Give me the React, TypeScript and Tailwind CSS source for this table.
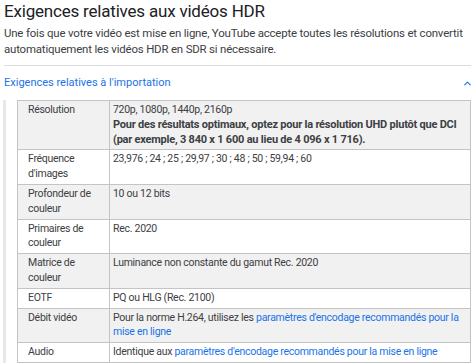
import { ChevronUp } from "lucide-react";

type Row = { label: string; value: React.ReactNode };

const Link = ({ children }: { children: React.ReactNode }) => (
  <a className="text-[#1a73e8]">{children}</a>
);

const rows: Row[] = [
  {
    label: "Résolution",
    value: (
      <>
        720p, 1080p, 1440p, 2160p
        <br />
        <b className="text-[11px] font-bold tracking-[-0.22px]">
          Pour des résultats optimaux, optez pour la résolution UHD plutôt que DCI (par exemple, 3 840 x 1 600 au lieu de 4 096 x 1 716).
        </b>
      </>
    ),
  },
  { label: "Fréquence d'images", value: "23,976 ; 24 ; 25 ; 29,97 ; 30 ; 48 ; 50 ; 59,94 ; 60" },
  { label: "Profondeur de couleur", value: "10 ou 12 bits" },
  { label: "Primaires de couleur", value: "Rec. 2020" },
  { label: "Matrice de couleur", value: "Luminance non constante du gamut Rec. 2020" },
  { label: "EOTF", value: "PQ ou HLG (Rec. 2100)" },
  {
    label: "Débit vidéo",
    value: (
      <>
        Pour la norme H.264, utilisez les <Link>paramètres d'encodage recommandés pour la mise en ligne</Link>
      </>
    ),
  },
  {
    label: "Audio",
    value: (
      <>
        Identique aux <Link>paramètres d'encodage recommandés pour la mise en ligne</Link>
      </>
    ),
  },
];

const App = () => {
  return (
    <div className="h-[364px] w-[475px] overflow-hidden bg-white font-['Roboto',sans-serif] text-[#202124]">
      <div className="px-[4px]">
        <h1 className="text-[17px] leading-[22px] font-normal tracking-[-0.2px]">Exigences relatives aux vidéos HDR</h1>
        <p className="mt-[3px] text-[11.45px] leading-[16px] tracking-[-0.18px] text-[#3c4043]">
          Une fois que votre vidéo est mise en ligne, YouTube accepte toutes les résolutions et convertit automatiquement les vidéos HDR en SDR si nécessaire.
        </p>
        <div className="mt-[8px] border-t border-[#dadce0]" />
        <div className="flex h-[34px] items-center justify-between text-[11px] text-[#1a73e8]">
          <span>Exigences relatives à l'importation</span>
          <ChevronUp className="mr-[-2px] h-[11px] w-[11px]" strokeWidth={2.5} />
        </div>
        <div className="ml-[-1px] border-l-[3px] border-[#e8e8e8] pl-[11px]">
          <table className="w-full border-collapse border border-[#c4c4c4] text-[10.5px] leading-[14.8px] tracking-[-0.28px] text-[#3c4043]">
            <tbody>
              {rows.map((r, i) => (
                <tr key={r.label} className={i % 2 === 0 ? "bg-[#f1f1f1]" : "bg-white"}>
                  <td className="w-[92px] border border-[#c4c4c4] pl-[10px] pr-[4px] py-[2px] align-top">{r.label}</td>
                  <td className="border border-[#c4c4c4] pl-[3px] pr-[4px] py-[2px] align-top">{r.value}</td>
                </tr>
              ))}
            </tbody>
          </table>
        </div>
      </div>
    </div>
  );
};

export default App;
